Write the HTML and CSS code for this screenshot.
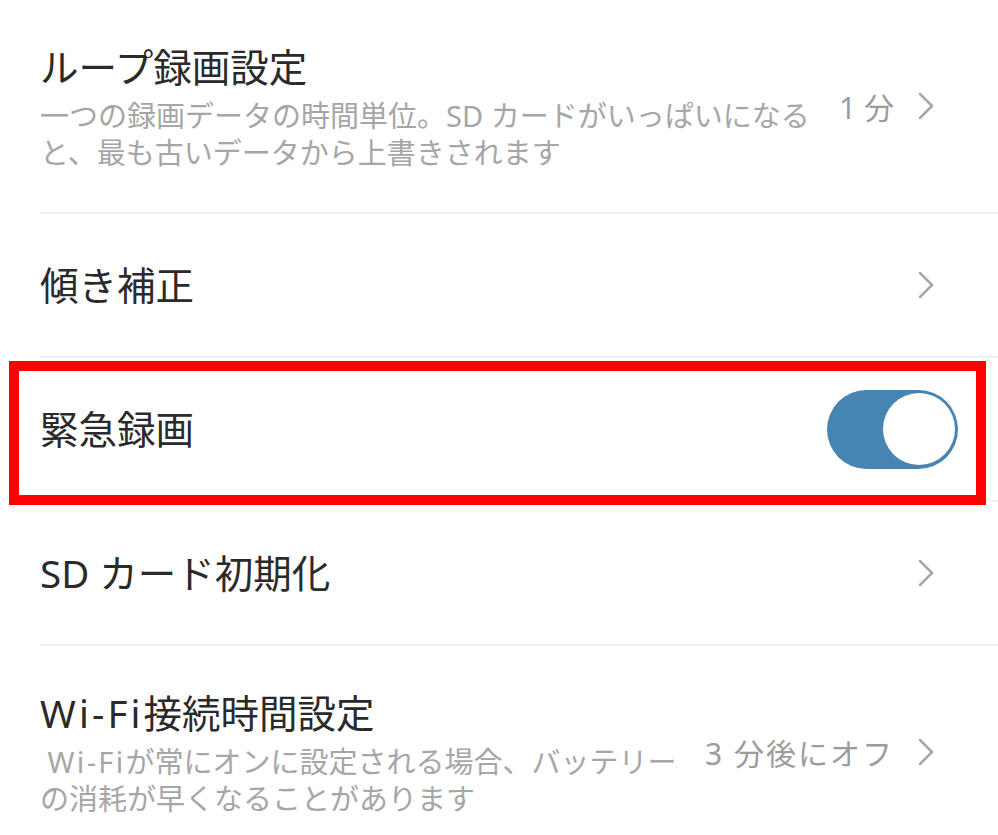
FILE: index.html
```html
<!DOCTYPE html>
<html lang="ja">
<head>
    <meta charset="UTF-8">
    <meta name="viewport" content="width=device-width, initial-scale=1.0">
    <title>録画設定</title>
    <link rel="stylesheet" href="styles.css">
</head>
<body>
    <ul class="settings">
        <li class="row two-line">
            <div class="text">
                <div class="title">ループ録画設定</div>
                <div class="desc">一つの録画データの時間単位。SD カードがいっぱいになる<br>と、最も古いデータから上書きされます</div>
            </div>
            <span class="value">1 分</span>
            <svg class="chevron" viewBox="0 0 16 28"><polyline points="2,2 14,14 2,26"/></svg>
        </li>
        <li class="row">
            <div class="text">
                <div class="title">傾き補正</div>
            </div>
            <svg class="chevron" viewBox="0 0 16 28"><polyline points="2,2 14,14 2,26"/></svg>
        </li>
        <li class="row">
            <div class="text">
                <div class="title">緊急録画</div>
            </div>
            <div class="toggle"><div class="knob"></div></div>
            <!-- red annotation box around the row -->
            <div class="highlight"></div>
        </li>
        <li class="row">
            <div class="text">
                <div class="title">SD カード初期化</div>
            </div>
            <svg class="chevron" viewBox="0 0 16 28"><polyline points="2,2 14,14 2,26"/></svg>
        </li>
        <li class="row two-line">
            <div class="text">
                <div class="title"><span class="latin">Wi-Fi</span>接続時間設定</div>
                <div class="desc">&nbsp;<span class="latin">Wi-Fi</span>が常にオンに設定される場合、バッテリー<br>の消耗が早くなることがあります</div>
            </div>
            <span class="value wide">3 分後にオフ</span>
            <svg class="chevron" viewBox="0 0 16 28"><polyline points="2,2 14,14 2,26"/></svg>
        </li>
    </ul>
</body>
</html>
```

FILE: styles.css
```css
body {
    margin: 0;
    background: #fff;
    font-family: "Noto Sans", "Noto Sans CJK JP", sans-serif;
}
.settings {
    list-style: none;
    margin: 0;
    padding: 0 0 0 40px;
}
.row {
    position: relative;
    display: flex;
    align-items: center;
    box-sizing: border-box;
    height: 144px;
    padding-right: 40px;
    border-bottom: 2px solid #f1f1f1;
}
.row.two-line {
    height: 214px;
}
.text {
    flex: 1;
}
.title {
    font-size: 38.5px;
    line-height: 52px;
    color: #2a2a2a;
}
.desc {
    margin-top: 4px;
    font-size: 29px;
    line-height: 37px;
    color: #a6a6a6;
    white-space: nowrap;
}
.latin {
    letter-spacing: 0.08em;
}
.value {
    font-size: 30px;
    color: #9c9c9c;
    margin-right: 24px;
    white-space: nowrap;
}
.value.wide {
    letter-spacing: 2px;
}
.chevron {
    flex-shrink: 0;
    width: 16px;
    height: 28px;
    margin-right: 24px;
    fill: none;
    stroke: #a8a8a8;
    stroke-width: 2.5;
    stroke-linecap: round;
    stroke-linejoin: round;
}
.toggle {
    display: flex;
    justify-content: flex-end;
    align-items: center;
    box-sizing: border-box;
    width: 131px;
    height: 79px;
    padding: 3px;
    border-radius: 40px;
    background: #4684b4;
}
.knob {
    width: 72px;
    height: 72px;
    border-radius: 50%;
    background: #fff;
}
.highlight {
    position: absolute;
    left: -31px;
    top: 3px;
    right: 12px;
    bottom: -5px;
    border: 10px solid #ff0000;
    pointer-events: none;
}
```
